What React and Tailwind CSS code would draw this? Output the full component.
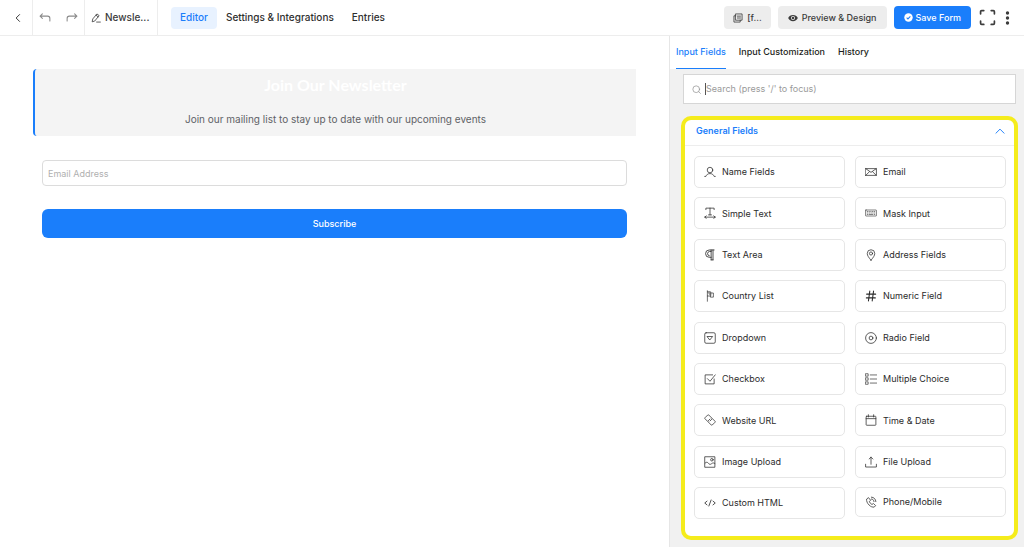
import React, { useState } from 'react';

const Icon = ({ children, className = 'w-3 h-3', strokeWidth = 1, viewBox = '0 0 16 16' }) => (
  <svg
    viewBox={viewBox}
    className={`shrink-0 ${className}`}
    fill="none"
    stroke="currentColor"
    strokeWidth={strokeWidth}
    strokeLinecap="round"
    strokeLinejoin="round"
    aria-hidden="true"
  >
    {children}
  </svg>
);

const GENERAL_FIELDS = [
  {
    label: 'Name Fields',
    icon: (
      <Icon>
        <circle cx="8" cy="5.400" r="3.700" />
        <path d="M1 13.900h1.500c.8-2.400 2.800-3.800 5.500-3.800s4.700 1.400 5.500 3.800H15" />
      </Icon>
    ),
  },
  {
    label: 'Email',
    icon: (
      <Icon>
        <rect x="0.800" y="3.500" width="14.400" height="9" />
        <path d="M1 3.500l7 5 7-5M1 12.500l5-5M15 12.500l-5-5" />
      </Icon>
    ),
  },
  {
    label: 'Simple Text',
    icon: (
      <Icon>
        <path d="M2.500 3.500v-2h11v2M8 1.500v9M6 10.500h4M1 13.500h14M3 11.800l-2 1.700 2 1.700M13 11.800l2 1.700-2 1.700" />
      </Icon>
    ),
  },
  {
    label: 'Mask Input',
    icon: (
      <Icon strokeWidth={0.8}>
        <rect x="0.800" y="4" width="14.400" height="8" rx="0.500" />
        <path d="M3 6h.6M5.300 6h.6M7.600 6h.6M9.900 6h.6M12.200 6h.8M3 8h1M5.800 8h.6M8 8h.6M10.200 8h.6M12.400 8h.6M3 10h.6M5.300 10h5.200M12.400 10h.6" />
      </Icon>
    ),
  },
  {
    label: 'Text Area',
    icon: (
      <Icon strokeWidth={1.100}>
        <path d="M13.500 1.300H7a4.900 4.900 0 0 0 0 9.800h2.500M9.500 1.300v13.200M12 1.300v13.200M9.500 14.500H12M9.500 3.300H7.200a3 3 0 0 0 0 5.900" />
      </Icon>
    ),
  },
  {
    label: 'Address Fields',
    icon: (
      <Icon>
        <path d="M8 15C5 11.300 3 8.700 3 6a5 5 0 0 1 10 0c0 2.700-2 5.300-5 9z" />
        <circle cx="8" cy="6" r="2.100" />
      </Icon>
    ),
  },
  {
    label: 'Country List',
    icon: (
      <Icon strokeWidth={0.9}>
        <path d="M4.500 1v14M4.500 2.500h4.500v5.500H4.500M9 4h3.500v5.500H8.500V8M6.700 2.500v3h2.300" />
      </Icon>
    ),
  },
  {
    label: 'Numeric Field',
    icon: (
      <Icon strokeWidth={1.4}>
        <path d="M6.400 1.500l-1.800 13M11.400 1.500l-1.800 13M2.200 5.500h12M1.800 10.500h12" />
      </Icon>
    ),
  },
  {
    label: 'Dropdown',
    icon: (
      <Icon>
        <rect x="1" y="1" width="14" height="14" rx="1.800" />
        <path d="M4.500 6h7L8 10.300z" />
      </Icon>
    ),
  },
  {
    label: 'Radio Field',
    icon: (
      <Icon>
        <circle cx="8" cy="8" r="7.200" />
        <circle cx="8" cy="8" r="2.500" />
      </Icon>
    ),
  },
  {
    label: 'Checkbox',
    icon: (
      <Icon>
        <path d="M11.500 2.500h-10v12h12V8M4.500 7.500l3.500 3.500 7-8.500" />
      </Icon>
    ),
  },
  {
    label: 'Multiple Choice',
    icon: (
      <Icon strokeWidth={0.9}>
        <rect x="1" y="1" width="3.200" height="3.200" />
        <rect x="1" y="6.400" width="3.200" height="3.200" />
        <rect x="1" y="11.800" width="3.200" height="3.200" />
        <path d="M7 2.600h8.500M7 8h8.500M7 13.400h8.500" />
      </Icon>
    ),
  },
  {
    label: 'Website URL',
    icon: (
      <Icon>
        <path d="M4.500 9.500L1.300 6.300a.9.9 0 0 1 0-1.300L5 1.300a.9.900 0 0 1 1.300 0l4.200 4.200a.9.900 0 0 1 0 1.300L8 9.300" />
        <path d="M11.500 6.500l3.200 3.200a.9.900 0 0 1 0 1.300L11 14.700a.9.900 0 0 1-1.300 0l-4.200-4.200a.9.900 0 0 1 0-1.300L8 6.700" />
      </Icon>
    ),
  },
  {
    label: 'Time & Date',
    icon: (
      <Icon>
        <rect x="1.500" y="3" width="13" height="12" rx="0.800" />
        <path d="M1.500 6.200h13M4.500 1v3M11.500 1v3" />
      </Icon>
    ),
  },
  {
    label: 'Image Upload',
    icon: (
      <Icon>
        <rect x="1.500" y="1" width="13" height="14" />
        <circle cx="10.500" cy="5" r="1.700" />
        <path d="M1.500 9.500c1.700-1.700 3-1.700 4.200 0s2.600 2.200 4.300.8 3-1.300 4.500-.3" />
      </Icon>
    ),
  },
  {
    label: 'File Upload',
    icon: (
      <Icon>
        <path d="M8 11V1.500M5.500 4l2.500-2.500L10.500 4M.8 11v3.700h14.400V11" />
      </Icon>
    ),
  },
  {
    label: 'Custom HTML',
    icon: (
      <Icon strokeWidth={1.100}>
        <path d="M4 5.500L1 8l3 2.500M12 5.500L15 8l-3 2.500M9.500 4L6.500 12" />
      </Icon>
    ),
  },
  {
    label: 'Phone/Mobile',
    compact: true,
    icon: (
      <Icon>
        <path d="M4.300 2.500L2.200 4c-.5 2.700.8 5.600 3.200 8s4.600 3 6.900 2.800l1.900-2-3-2.800-1.900 1.300c-1.600-.8-2.700-2-3.500-3.700L7.100 6zM8.500 1.500c3.600.3 5.700 2.400 6 6M8.500 4c2.100.2 3.300 1.400 3.500 3.500" />
      </Icon>
    ),
  },
];

const MAIN_TABS = ['Editor', 'Settings & Integrations', 'Entries'];
const SIDEBAR_TABS = ['Input Fields', 'Input Customization', 'History'];

const Header = () => {
  const [activeTab, setActiveTab] = useState('Editor');

  return (
    <header className="flex h-9 items-stretch border-b border-[#ededed] text-[#3c3c3c]">
      <button type="button" aria-label="Back" className="w-[33px] flex items-center justify-center border-r border-[#ededed] pl-1">
        <Icon strokeWidth={1.600} className="w-[10px] h-[10px]">
          <path d="M10.500 2.500L5 8l5.500 5.500" />
        </Icon>
      </button>
      <div className="w-[52px] flex items-center justify-between px-[6px] border-r border-[#ededed] text-[#8a8a8a]">
        <button type="button" aria-label="Undo">
          <Icon strokeWidth={1.400}>
            <path d="M4.500 2.500L1.500 5.500l3 3M1.500 5.500h10a3 3 0 0 1 3 3V12" />
          </Icon>
        </button>
        <button type="button" aria-label="Redo">
          <Icon strokeWidth={1.400}>
            <path d="M11.500 2.500l3 3-3 3M14.500 5.500h-10a3 3 0 0 0-3 3V12" />
          </Icon>
        </button>
      </div>
      <button type="button" className="w-[73px] flex items-center gap-1 pl-[6px] border-r border-[#ededed] text-[10px] font-medium">
        <Icon strokeWidth={1.300} className="w-[10px] h-[10px]">
          <path d="M2 13.500l.8-4L9.500 1.500l3.500 2.700-6.700 8.200zM8 3.500l3.300 2.600M9 14.500h6" />
        </Icon>
        Newsle...
      </button>

      <nav className="flex items-center ml-[13px] text-[10px] font-medium">
        {MAIN_TABS.map((tab) => (
          <button
            key={tab}
            type="button"
            onClick={() => setActiveTab(tab)}
            className={`h-[22px] px-[9px] rounded ${activeTab === tab ? 'bg-[#e8f2ff] text-[#1a7efb]' : 'text-[#2f2f2f]'}`}
          >
            {tab}
          </button>
        ))}
      </nav>

      <div className="flex items-center ml-auto pr-[14px] text-[9px] font-medium">
        <button type="button" className="h-[23px] px-[9px] flex items-center gap-1 rounded bg-[#ededed]">
          <Icon strokeWidth={1.300} className="w-[10px] h-[10px]">
            <path d="M4.500 1.500h10v10h-10zM4.500 4.500h-3v10h10v-3M7 5h5M7 8h5" />
          </Icon>
          [f...
        </button>
        <button type="button" className="h-[23px] px-[10px] ml-[7px] flex items-center gap-1 rounded bg-[#ededed]">
          <svg viewBox="0 0 16 16" className="w-[10px] h-[10px]" fill="currentColor" aria-hidden="true">
            <path fillRule="evenodd" d="M8 3C4.500 3 1.500 5 .3 8c1.200 3 4.200 5 7.700 5s6.500-2 7.700-5C14.500 5 11.500 3 8 3zm0 1.800a3.200 3.200 0 1 1 0 6.400 3.200 3.200 0 0 1 0-6.400z" />
            <circle cx="8" cy="8" r="1.900" />
          </svg>
          Preview &amp; Design
        </button>
        <button type="button" className="h-[23px] px-[10px] ml-[7px] flex items-center gap-[3px] rounded bg-[#1a7efb] text-white">
          <svg viewBox="0 0 16 16" className="w-[9px] h-[9px]" aria-hidden="true">
            <circle cx="8" cy="8" r="7.500" fill="#fff" />
            <path d="M4.700 8.300l2.300 2.200 4.300-4.600" fill="none" stroke="#1a7efb" strokeWidth="1.800" />
          </svg>
          Save Form
        </button>
        <button type="button" aria-label="Full screen" className="ml-2">
          <Icon strokeWidth={1.600} className="w-[17px] h-[17px]">
            <path d="M1.500 4.500V2.500a1 1 0 0 1 1-1h2M11.500 1.500h2a1 1 0 0 1 1 1v2M14.500 11.500v2a1 1 0 0 1-1 1h-2M4.500 14.500h-2a1 1 0 0 1-1-1v-2" />
          </Icon>
        </button>
        <button type="button" aria-label="More" className="ml-[9px]">
          <svg viewBox="0 0 5 16" className="w-[5px] h-4" fill="currentColor" aria-hidden="true">
            <circle cx="2.500" cy="3" r="1.700" />
            <circle cx="2.500" cy="8" r="1.700" />
            <circle cx="2.500" cy="13" r="1.700" />
          </svg>
        </button>
      </div>
    </header>
  );
};

const FormPreview = () => (
  <main className="flex-1 min-w-0 pl-[33px] pr-[33px] pt-[33px]">
    <div className="h-[67px] pt-1 rounded-l border-l-2 border-[#1a7efb] bg-[#f4f4f4] text-center">
      <h1 className="font-['Lato',sans-serif] text-base leading-6 font-bold text-white">Join Our Newsletter</h1>
      <p className="mt-[14px] text-[10px] leading-4 text-[#606266]">
        Join our mailing list to stay up to date with our upcoming events
      </p>
    </div>
    <form className="px-[9px] pt-6" onSubmit={(e) => e.preventDefault()}>
      <input
        type="email"
        aria-label="Email Address"
        placeholder="Email Address"
        className="block w-full h-[26px] px-[5px] rounded-sm border border-[#dcdcdc] text-[9px] placeholder:text-[#b0b0b0] outline-none"
      />
      <button type="submit" className="mt-[23px] w-full h-[29px] rounded-md bg-[#1a7efb] text-white text-[9px] font-medium">
        Subscribe
      </button>
    </form>
  </main>
);

const FieldButton = ({ field }) => (
  <button
    type="button"
    className={`flex items-center gap-[6px] px-[9px] rounded-[5px] border border-[#e6e6e6] bg-white text-[9px] text-[#2b2b2b] ${field.compact ? 'h-[30px]' : 'h-8'}`}
  >
    {field.icon}
    {field.label}
  </button>
);

const Sidebar = () => {
  const [activeTab, setActiveTab] = useState('Input Fields');
  const [open, setOpen] = useState(true);

  return (
    <aside className="w-[355px] shrink-0 border-l border-[#e6e6e6] bg-[#f1f1f1]">
      <nav className="flex gap-[13px] h-[33px] pl-[6px] bg-white text-[9px] font-medium">
        {SIDEBAR_TABS.map((tab) => (
          <button
            key={tab}
            type="button"
            onClick={() => setActiveTab(tab)}
            className={`border-b ${activeTab === tab ? 'border-[#1a7efb] text-[#1a7efb]' : 'border-transparent text-[#1e1f21]'}`}
          >
            {tab}
          </button>
        ))}
      </nav>

      <div className="flex items-center gap-1 h-[30px] mt-[5px] ml-[13px] mr-2 pl-2 border border-[#d6d6d6] bg-white text-[#8a8a8a]">
        <Icon strokeWidth={1.200} className="w-[9px] h-[9px]">
          <circle cx="7.500" cy="7.500" r="6" />
          <path d="M12 12l3 3" />
        </Icon>
        <input
          type="text"
          aria-label="Search fields"
          placeholder="Search (press '/' to focus)"
          className="flex-1 h-3 border-l border-[#555] text-[9px] leading-3 placeholder:text-[#9a9a9a] outline-none"
        />
      </div>

      <section className="mt-3 ml-[11px] mr-[6px] mb-[7px] rounded-[10px] border-4 border-[#f5ec1c] bg-white">
        <button
          type="button"
          aria-expanded={open}
          onClick={() => setOpen(!open)}
          className="w-full h-[26px] flex items-center justify-between pl-[11px] pr-[9px] pb-1 border-b border-[#ededed] text-[9px] font-semibold text-[#1a7efb]"
        >
          General Fields
          <Icon strokeWidth={1.500} className={`w-[10px] h-[10px] ${open ? '' : 'rotate-180'}`}>
            <path d="M1.500 11.500L8 5l6.500 6.500" />
          </Icon>
        </button>
        {open && (
          <div className="grid grid-cols-2 content-between gap-x-[10px] min-h-[363px] mt-[10px] mb-[17px] ml-[9px] mr-2">
            {GENERAL_FIELDS.map((field) => (
              <FieldButton key={field.label} field={field} />
            ))}
          </div>
        )}
      </section>
    </aside>
  );
};

export default function App() {
  return (
    <div className="min-h-screen flex flex-col bg-white font-['Inter',sans-serif]">
      <Header />
      <div className="flex flex-1">
        <FormPreview />
        <Sidebar />
      </div>
    </div>
  );
}
